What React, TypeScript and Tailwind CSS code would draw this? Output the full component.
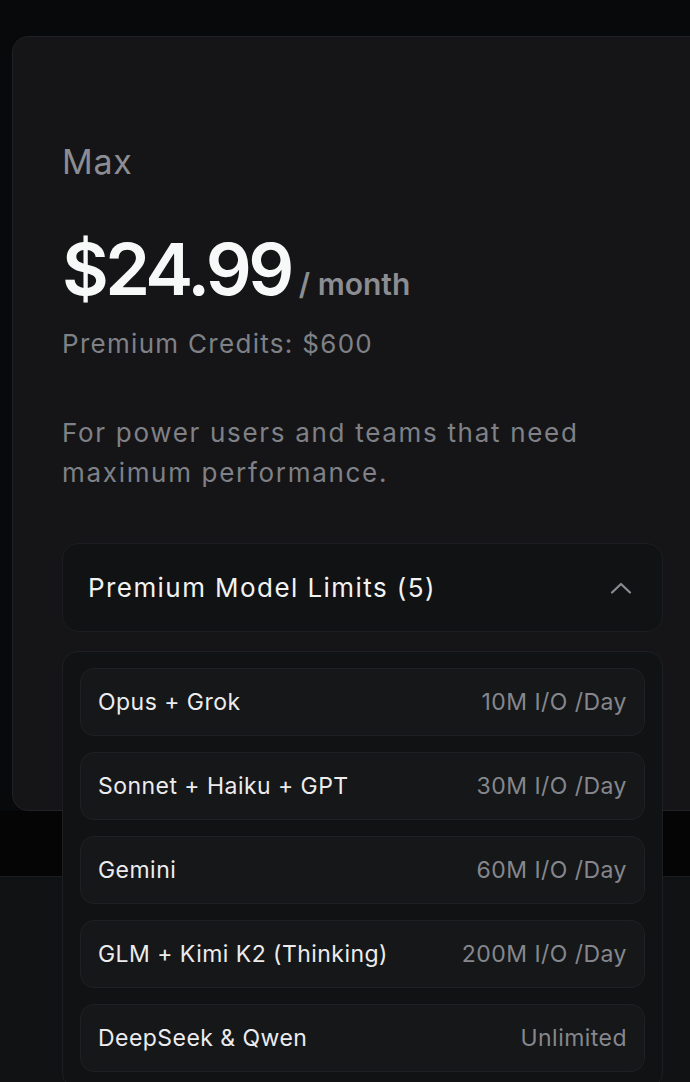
import React from 'react';

const limits = [
  { name: 'Opus + Grok', value: '10M I/O /Day' },
  { name: 'Sonnet + Haiku + GPT', value: '30M I/O /Day' },
  { name: 'Gemini', value: '60M I/O /Day' },
  { name: 'GLM + Kimi K2 (Thinking)', value: '200M I/O /Day' },
  { name: 'DeepSeek & Qwen', value: 'Unlimited' },
];

const ChevronUp: React.FC = () => (
  <svg width="22" height="14" viewBox="0 0 22 14" fill="none">
    <path d="M2 11.5 11 3l9 8.5" stroke="#8b8d93" strokeWidth="2.2" strokeLinecap="round" strokeLinejoin="round" />
  </svg>
);

const LimitRow: React.FC<{ name: string; value: string }> = ({ name, value }) => (
  <div className="flex h-[68px] items-center justify-between rounded-[14px] border border-[#1f2023] bg-[#161719] px-[17px]">
    <span className="text-[23px] tracking-[0.02em] text-[#ececee]">{name}</span>
    <span className="text-[23px] tracking-[0.02em] text-[#85878d]">{value}</span>
  </div>
);

export default function App() {
  return (
    <div className="relative h-[1082px] w-[690px] overflow-hidden bg-[#050506] font-['Inter',sans-serif]">
      <div className="bg-[#08090b] pt-[36px] pl-[12px]">
        <div className="w-[720px] h-[775px] rounded-[16px] border border-[#202124] bg-[#151517] pl-[49px] pt-[108px]">
          <div className="text-[34px] leading-[34px] tracking-[0.02em] text-[#8b8d93]">Max</div>

          <div className="mt-[54px] flex items-baseline gap-[8px]">
            <span className="text-[72px] leading-[72px] font-semibold tracking-[-0.05em] text-[#f7f8f8]">$24.99</span>
            <span className="text-[30px] font-semibold text-[#8b8d93]">/ month</span>
          </div>

          <div className="mt-[20px] text-[26px] leading-[34px] tracking-[0.05em] text-[#7f8187]">Premium Credits: $600</div>

          <p className="mt-[52px] max-w-[570px] text-[26px] leading-[40px] tracking-[0.065em] text-[#7f8187]">
            For power users and teams that need maximum performance.
          </p>

          <div className="relative mt-[50px] w-[601px]">
            <div className="flex h-[89px] items-center justify-between rounded-[16px] border border-[#1c1d20] bg-[#111214] pl-[25px] pr-[30px]">
              <span className="text-[26px] tracking-[0.055em] text-[#f2f2f3]">Premium Model Limits (5)</span>
              <ChevronUp />
            </div>

            <div className="absolute left-0 top-[108px] w-[601px] rounded-[16px] border border-[#1e1f22] bg-[#111214] px-[17px] pt-[16px] pb-[16px]">
              <div className="flex flex-col gap-[16px]">
                {limits.map((l) => (
                  <LimitRow key={l.name} name={l.name} value={l.value} />
                ))}
              </div>
            </div>
          </div>
        </div>
      </div>

      <div className="mt-[65px] h-[300px] border-t border-[#1b1c1f] bg-[#111214]" />
    </div>
  );
}
